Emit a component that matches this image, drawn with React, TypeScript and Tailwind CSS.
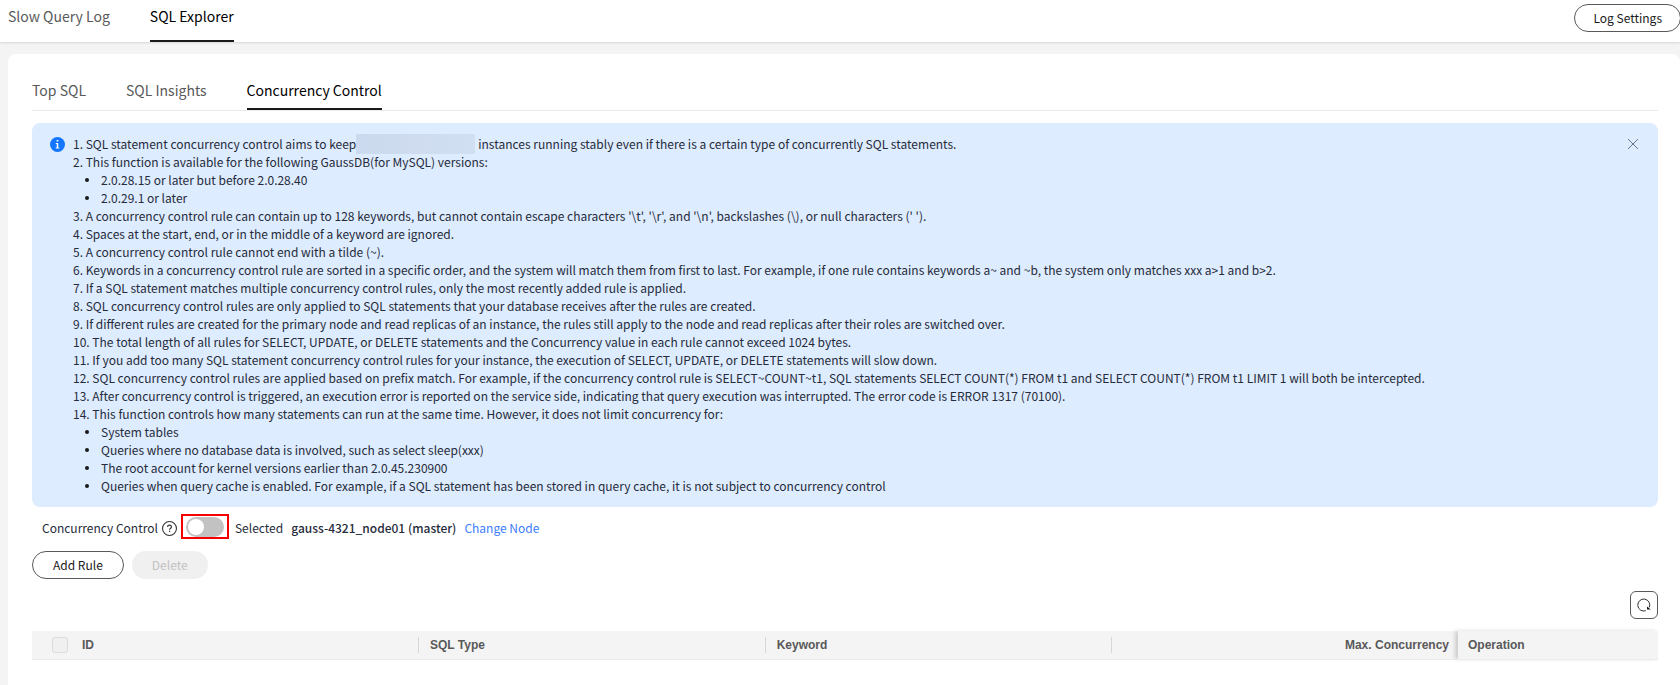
import { useState, type ReactNode } from "react";

const SANS = "font-['Noto_Sans_CJK_SC',sans-serif]";

function Tab({ active, children }: { active?: boolean; children: ReactNode }) {
  return (
    <a
      href="#"
      aria-current={active ? "page" : undefined}
      className={
        active
          ? "flex flex-col justify-between text-sm text-black after:h-0.5 after:bg-[#191919]"
          : "flex flex-col justify-between text-sm text-[#595959]"
      }
    >
      {children}
    </a>
  );
}

const versions = ["2.0.28.15 or later but before 2.0.28.40", "2.0.29.1 or later"];

const middleNotes = [
  "3. A concurrency control rule can contain up to 128 keywords, but cannot contain escape characters '\\t', '\\r', and '\\n', backslashes (\\), or null characters (' ').",
  "4. Spaces at the start, end, or in the middle of a keyword are ignored.",
  "5. A concurrency control rule cannot end with a tilde (~).",
  "6. Keywords in a concurrency control rule are sorted in a specific order, and the system will match them from first to last. For example, if one rule contains keywords a~ and ~b, the system only matches xxx a>1 and b>2.",
  "7. If a SQL statement matches multiple concurrency control rules, only the most recently added rule is applied.",
  "8. SQL concurrency control rules are only applied to SQL statements that your database receives after the rules are created.",
  "9. If different rules are created for the primary node and read replicas of an instance, the rules still apply to the node and read replicas after their roles are switched over.",
  "10. The total length of all rules for SELECT, UPDATE, or DELETE statements and the Concurrency value in each rule cannot exceed 1024 bytes.",
  "11. If you add too many SQL statement concurrency control rules for your instance, the execution of SELECT, UPDATE, or DELETE statements will slow down.",
  "12. SQL concurrency control rules are applied based on prefix match. For example, if the concurrency control rule is SELECT~COUNT~t1, SQL statements SELECT COUNT(*) FROM t1 and SELECT COUNT(*) FROM t1 LIMIT 1 will both be intercepted.",
  "13. After concurrency control is triggered, an execution error is reported on the service side, indicating that query execution was interrupted. The error code is ERROR 1317 (70100).",
  "14. This function controls how many statements can run at the same time. However, it does not limit concurrency for:",
];

const exclusions = [
  "System tables",
  "Queries where no database data is involved, such as select sleep(xxx)",
  "The root account for kernel versions earlier than 2.0.45.230900",
  "Queries when query cache is enabled. For example, if a SQL statement has been stored in query cache, it is not subject to concurrency control",
];

function Bullets({ items }: { items: string[] }) {
  return (
    <ul>
      {items.map((text) => (
        <li key={text} className="flex items-center pl-3">
          <span className="mr-3 size-1 rounded-full bg-[#191919]" />
          {text}
        </li>
      ))}
    </ul>
  );
}

function Notice({ onClose }: { onClose: () => void }) {
  return (
    <section className="mt-3 flex items-start rounded-lg bg-[#deecff] py-3 pr-5 pl-[18px] text-xs leading-[18px] text-[#252b3a]">
      <svg viewBox="0 0 14 14" className="mt-0.5 mr-2 size-[15px] shrink-0" aria-hidden="true">
        <circle cx="7" cy="7" r="7" fill="#1476ff" />
        <path d="M6.2 2.700h1.600v1.600H6.200zM5.400 5.500h2.300v4.200h1v1.100H5.400V9.700h.9V6.600h-.9z" fill="#fff" />
      </svg>
      <div className="min-w-0 flex-1">
        <p className="flex items-center">
          1. SQL statement concurrency control aims to keep
          <span className="-my-px mr-[3px] h-5 w-[119px] bg-linear-to-r from-[#cbdaee] via-[#cfdcef] to-[#d0dff2]" />
          instances running stably even if there is a certain type of concurrently SQL statements.
        </p>
        <p>2. This function is available for the following GaussDB(for MySQL) versions:</p>
        <Bullets items={versions} />
        {middleNotes.map((text) => (
          <p key={text}>{text}</p>
        ))}
        <Bullets items={exclusions} />
      </div>
      <button type="button" aria-label="Close" onClick={onClose} className="mt-1 shrink-0">
        <svg viewBox="0 0 10 10" className="size-2.5" fill="none" stroke="#71757f" strokeWidth="1">
          <path d="M0 0l10 10M10 0L0 10" />
        </svg>
      </button>
    </section>
  );
}

export default function App() {
  const [open, setOpen] = useState(true);
  const [enabled, setEnabled] = useState(false);
  return (
    <div className={`flex min-h-screen flex-col overflow-x-hidden bg-[#f4f4f4] ${SANS}`}>
      <header className="flex h-[42px] shrink-0 items-start justify-between bg-white pl-2 shadow-[0_1px_2px_rgba(0,0,0,0.12)]">
        <nav className="flex h-full gap-10 pt-1.5 leading-[22px]">
          <Tab>Slow Query Log</Tab>
          <Tab active>SQL Explorer</Tab>
        </nav>
        <button
          type="button"
          className="mt-1 -mr-px h-7 rounded-full border border-[#595959] px-[18px] text-xs text-[#191919]"
        >
          Log Settings
        </button>
      </header>

      <main className="mt-3 ml-2 flex-1 rounded-t-lg bg-white pr-[22px] pl-6">
        <nav className="flex h-[57px] gap-10 border-b border-[#ebebeb] pt-[26px] leading-[22px]">
          <Tab>Top SQL</Tab>
          <Tab>SQL Insights</Tab>
          <Tab active>Concurrency Control</Tab>
        </nav>

        {open && <Notice onClose={() => setOpen(false)} />}

        <div className="mt-[7px] flex h-7 items-center pl-2.5 text-xs text-[#252b3a]">
          <label htmlFor="concurrency-switch">Concurrency Control</label>
          <svg viewBox="0 0 14 14" className="mr-1 ml-1 size-[15px]" fill="none" stroke="#333" aria-hidden="true">
            <circle cx="7" cy="7" r="6.500" strokeWidth="1" />
            <path d="M5.200 5.600c0-1 .8-1.700 1.800-1.700s1.800.7 1.800 1.600c0 1.200-1.700 1.300-1.700 2.600M7.100 9.200v1.100" strokeWidth="1.100" />
          </svg>
          <span className="flex h-[25px] w-12 items-center justify-center self-start border-2 border-[#f80000]">
            <input
              id="concurrency-switch"
              type="checkbox"
              role="switch"
              checked={enabled}
              onChange={(e) => setEnabled(e.target.checked)}
              className="h-5 w-[38px] appearance-none rounded-full bg-[#c2c2c2] p-0.5 before:block before:size-4 before:rounded-full before:bg-white checked:bg-[#1476ff] checked:before:ml-[18px]"
            />
          </span>
          <span className="ml-1.5">Selected</span>
          <strong className="ml-2 font-medium">gauss-4321_node01 (master)</strong>
          <a href="#" className="ml-2 text-[#3c7cff]">
            Change Node
          </a>
        </div>

        <div className="mt-[9px] flex gap-2 text-xs">
          <button type="button" className="h-7 rounded-full border border-[#595959] px-5 text-[#191919]">
            Add Rule
          </button>
          <button type="button" disabled className="h-7 rounded-full bg-[#f0f0f0] px-5 text-[#c2c2c2]">
            Delete
          </button>
        </div>

        <div className="mt-3 flex justify-end">
          <button
            type="button"
            aria-label="Refresh"
            className="flex size-7 items-center justify-center rounded-md border border-[#595959]"
          >
            <svg viewBox="0 0 16 16" className="size-4" fill="none" stroke="#333" strokeWidth="1">
              <path d="M9.800 13.700A6 6 0 1 1 13.300 10.400" />
              <path d="M11 9.500v3h3.800z" fill="#191919" stroke="none" />
            </svg>
          </button>
        </div>

        <table className="mt-3 w-full table-fixed border-b border-[#ebebeb] bg-[#f4f4f4] text-left font-['Liberation_Sans',sans-serif] text-xs font-bold text-[#595959]">
          <thead>
            <tr className="h-7">
              <th className="w-[50px] pl-5">
                <input
                  type="checkbox"
                  aria-label="Select all rules"
                  disabled
                  className="block size-4 appearance-none rounded-[3px] border border-[#dbdbdb] bg-[#f0f0f0]"
                />
              </th>
              <th className="w-[336px]">ID</th>
              <th>
                <div className="border-l border-[#d8d8d8] pl-[11px]">SQL Type</div>
              </th>
              <th>
                <div className="border-l border-[#d8d8d8] pl-[11px]">Keyword</div>
              </th>
              <th>
                <div className="border-l border-[#d8d8d8] pr-[9px] text-right">Max. Concurrency</div>
              </th>
              <th className="w-[200px] pl-2.5 shadow-[-3px_0_4px_rgba(0,0,0,0.16)]">Operation</th>
            </tr>
          </thead>
        </table>
      </main>
    </div>
  );
}
